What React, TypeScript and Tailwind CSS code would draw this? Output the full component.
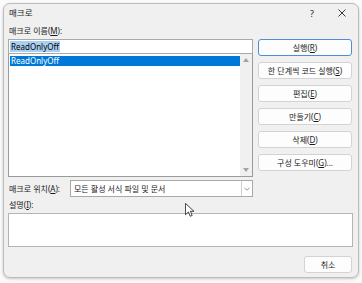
const font = "font-['Noto_Sans','Noto_Sans_CJK_KR',sans-serif]"

function Btn({ children, primary }: { children: React.ReactNode; primary?: boolean }) {
  return (
    <div
      className={`h-[17px] w-[94px] rounded-[3px] bg-[#fdfdfd] flex items-center justify-center border ${
        primary ? 'border-[#4c8fd6]' : 'border-[#d3d3d3]'
      }`}
    >
      {children}
    </div>
  )
}

export default function App() {
  return (
    <div className={`w-[362px] h-[283px] bg-[#fafafa] pl-[3px] pt-[3px] ${font} text-[8px] leading-none text-[#1b1b1b]`}>
      <div className="relative w-[356px] h-[275px] rounded-[7px] border border-[#bcbcbc] bg-[#f0f0f0] shadow-[0_1px_3px_rgba(0,0,0,0.2)] flex flex-col">
        {/* title bar */}
        <div className="h-[18px] flex items-center pl-[5px] pr-[12px]">
          <span className="text-[8.5px]">매크로</span>
          <span className="ml-auto mr-[24px] text-[9px]">?</span>
          <svg width="8" height="8" viewBox="0 0 8 8">
            <path d="M0.5 0.5L7.5 7.5M7.5 0.5L0.5 7.5" stroke="#222" strokeWidth="0.9" />
          </svg>
        </div>

        <div className="h-[17px] flex items-center pl-[5px]">
          매크로 이름(<u>M</u>):
        </div>

        <div className="flex pl-[4px] gap-[5px]">
          {/* left column */}
          <div className="w-[245px] flex flex-col">
            <div className="h-[15px] bg-white border border-[#a9a9a9] flex items-center pl-[1px]">
              <span className="bg-[#a9d0f3] text-black px-[1px] py-[1.5px]">ReadOnlyOff</span>
            </div>
            <div className="h-[123px] bg-white border border-[#9b9b9b] border-t-0 flex">
              <div className="flex-1 pt-[2px] pl-[1px]">
                <div className="h-[10px] bg-[#0078d7] text-white flex items-center pl-[1px]">ReadOnlyOff</div>
              </div>
              <div className="w-[12px] bg-[#f0f0f0] flex flex-col items-center justify-between py-[4px]">
                <svg width="6" height="4" viewBox="0 0 6 4">
                  <path d="M3 0L6 4H0Z" fill="#a3a3a3" />
                </svg>
                <svg width="6" height="4" viewBox="0 0 6 4">
                  <path d="M0 0H6L3 4Z" fill="#a3a3a3" />
                </svg>
              </div>
            </div>
            <div className="mt-[3px] h-[17px] flex items-center">
              <span className="w-[62px] pl-[1px]">
                매크로 위치(<u>A</u>):
              </span>
              <div className="flex-1 h-full bg-white border border-[#a9a9a9] flex items-center">
                <span className="flex-1 pl-[3px]">모든 활성 서식 파일 및 문서</span>
                <div className="w-[11px] h-full border-l border-[#d0d0d0] flex items-center justify-center">
                  <svg width="6" height="4" viewBox="0 0 6 4">
                    <path d="M0.5 0.8L3 3.2L5.5 0.8" stroke="#777" strokeWidth="0.8" fill="none" />
                  </svg>
                </div>
              </div>
            </div>
          </div>

          {/* right column */}
          <div className="flex flex-col gap-[6px]">
            <Btn primary>
              실행(<u>R</u>)
            </Btn>
            <Btn>
              한 단계씩 코드 실행(<u>S</u>)
            </Btn>
            <Btn>
              편집(<u>E</u>)
            </Btn>
            <Btn>
              만들기(<u>C</u>)
            </Btn>
            <Btn>
              삭제(<u>D</u>)
            </Btn>
            <Btn>
              구성 도우미(<u>G</u>)...
            </Btn>
          </div>
        </div>

        <div className="h-[16px] flex items-center pl-[5px]">
          설명(<u>I</u>):
        </div>
        <div className="ml-[4px] w-[345px] h-[34px] bg-white border border-[#b4b4b4]" />

        <div className="mt-[9px] ml-[300px] w-[48px] h-[17px] rounded-[3px] bg-[#fdfdfd] border border-[#d3d3d3] flex items-center justify-center">
          취소
        </div>

        {/* mouse pointer */}
        <svg className="absolute left-[181px] top-[199px]" width="9" height="14" viewBox="0 0 12 19">
          <path
            d="M0.5 0.5V16L4.5 12.2L7 18L9.6 16.9L7.2 11.2H12Z"
            fill="#fff"
            stroke="#000"
            strokeWidth="1"
            strokeLinejoin="round"
          />
        </svg>
      </div>
    </div>
  )
}
